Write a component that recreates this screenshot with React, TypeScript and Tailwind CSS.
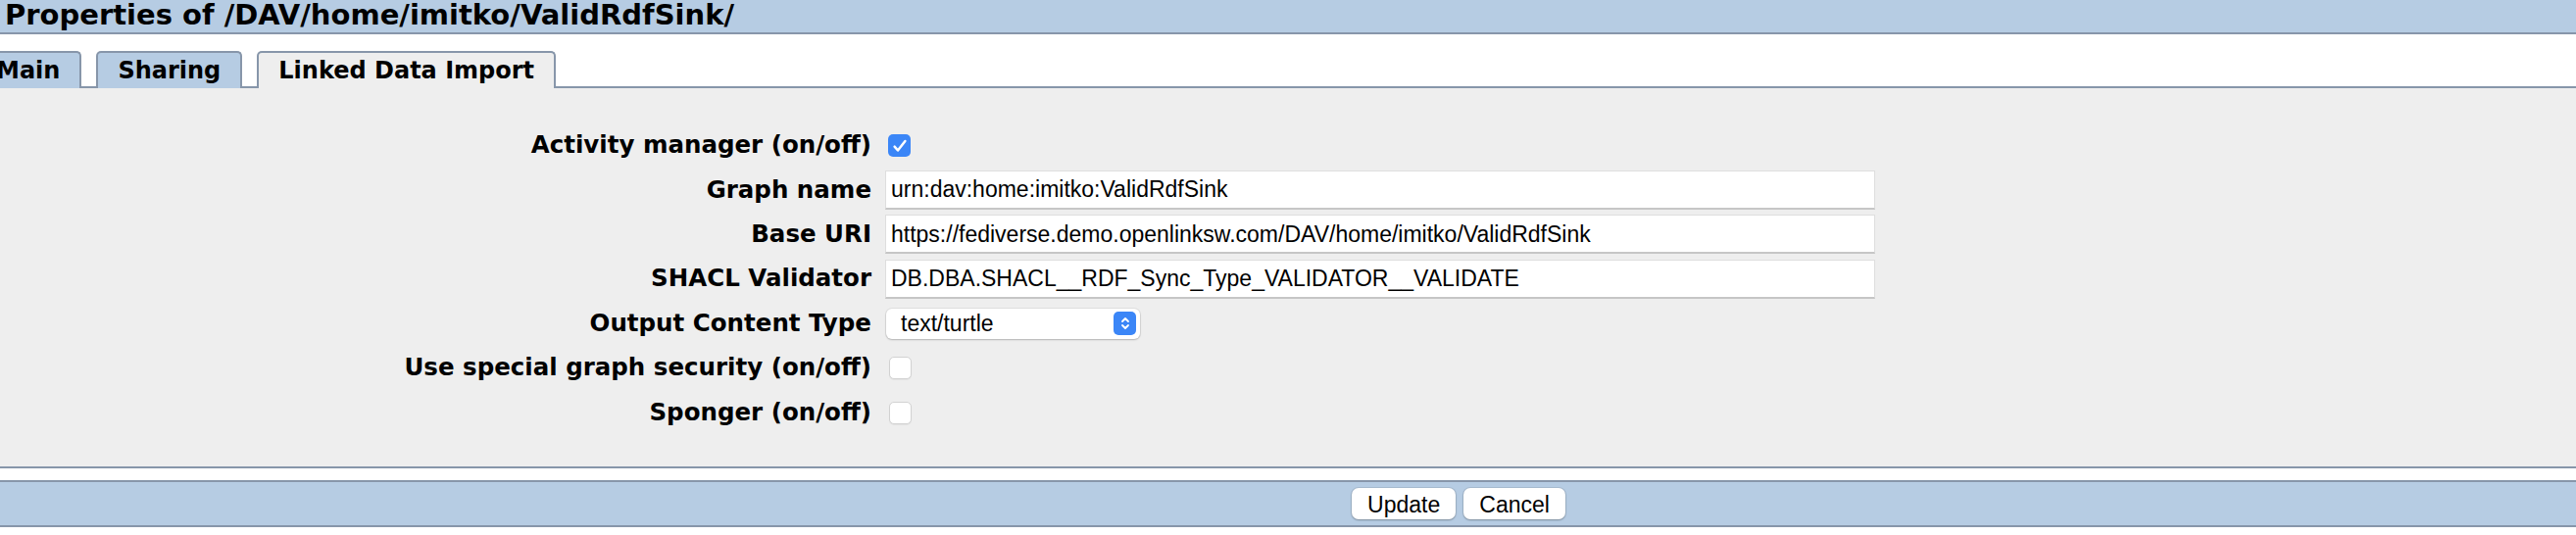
import type { ReactNode } from "react";

const label = "font-['DejaVu_Sans',sans-serif] font-bold text-[24.5px] text-black";
const control = "font-['Liberation_Sans',Arial,sans-serif] text-[23px] text-black";

function Row({ name, children }: { name: string; children: ReactNode }) {
  return (
    <div className="flex h-[45.4px] items-center">
      <div className={`w-[889px] shrink-0 text-right ${label}`}>{name}</div>
      <div className="ml-[14px] flex items-center">{children}</div>
    </div>
  );
}

function CheckBox({ checked }: { checked?: boolean }) {
  if (checked) {
    return (
      <span className="ml-[3px] flex h-[23px] w-[23px] items-center justify-center rounded-[5px] bg-[#3b86f7]">
        <svg width="18" height="18" viewBox="0 0 16 16" fill="none">
          <path d="M3.2 8.6l3 3.4L12.8 3.6" stroke="white" strokeWidth="2.2" strokeLinecap="round" strokeLinejoin="round" />
        </svg>
      </span>
    );
  }
  return <span className="ml-[4px] block h-[23px] w-[23px] rounded-[5px] border border-[#d2d2d2] bg-white shadow-[0_1px_1px_rgba(0,0,0,0.05)]" />;
}

function TextInput({ value }: { value: string }) {
  return (
    <div
      className={`flex h-[40px] w-[1010px] items-center border border-[#dedede] border-b-2 border-b-[#c6c6c6] bg-white pl-[5px] ${control}`}
    >
      {value}
    </div>
  );
}

function Select({ value }: { value: string }) {
  return (
    <div
      className={`ml-[1px] flex h-[31px] w-[259px] items-center justify-between rounded-[6px] bg-white pl-[15px] pr-[4px] shadow-[0_0_0_1px_rgba(0,0,0,0.06),0_1px_2px_rgba(0,0,0,0.2)] ${control}`}
    >
      <span>{value}</span>
      <span className="flex h-[24px] w-[23px] items-center justify-center rounded-[5px] bg-[#3b86f7]">
        <svg width="12" height="16" viewBox="0 0 12 16" fill="none">
          <path d="M3 6l3-3 3 3M3 10l3 3 3-3" stroke="white" strokeWidth="1.8" strokeLinecap="round" strokeLinejoin="round" />
        </svg>
      </span>
    </div>
  );
}

function Tab({ title, active }: { title: string; active?: boolean }) {
  return (
    <div
      className={`-mb-[2px] flex h-[38px] items-center rounded-t-[5px] border-2 border-b-0 border-[#8796aa] px-[20px] font-['DejaVu_Sans',sans-serif] text-[24px] font-bold text-black ${
        active ? "bg-[#eeeeee]" : "bg-[#b6cce3]"
      }`}
    >
      {title}
    </div>
  );
}

function Button({ children }: { children: ReactNode }) {
  return (
    <button
      className={`h-[32px] rounded-[7px] bg-white px-[16px] text-[#222] shadow-[0_0_0_1px_rgba(0,0,0,0.08),0_1px_2px_rgba(0,0,0,0.25)] ${control}`}
    >
      {children}
    </button>
  );
}

export default function App() {
  return (
    <div className="min-h-[546px] w-full overflow-hidden bg-white">
      <div className="h-[35px] border-b-2 border-[#8796aa] bg-[#b6cce3] pl-[5px] font-['DejaVu_Sans',sans-serif] text-[29px] font-bold leading-[30px] text-black">
        Properties of /DAV/home/imitko/ValidRdfSink/
      </div>

      <div className="flex h-[55px] items-end border-b-2 border-[#8796aa]">
        <div className="-ml-[26px] flex gap-[15px]">
          <Tab title="Main" />
          <Tab title="Sharing" />
          <Tab title="Linked Data Import" active />
        </div>
      </div>

      <div className="h-[388px] border-b-2 border-[#8796aa] bg-[#eeeeee] pt-[36px]">
        <Row name="Activity manager (on/off)">
          <CheckBox checked />
        </Row>
        <Row name="Graph name">
          <TextInput value="urn:dav:home:imitko:ValidRdfSink" />
        </Row>
        <Row name="Base URI">
          <TextInput value="https://fediverse.demo.openlinksw.com/DAV/home/imitko/ValidRdfSink" />
        </Row>
        <Row name="SHACL Validator">
          <TextInput value="DB.DBA.SHACL__RDF_Sync_Type_VALIDATOR__VALIDATE" />
        </Row>
        <Row name="Output Content Type">
          <Select value="text/turtle" />
        </Row>
        <Row name="Use special graph security (on/off)">
          <CheckBox />
        </Row>
        <Row name="Sponger (on/off)">
          <CheckBox />
        </Row>
      </div>

      <div className="mt-[12px] flex h-[48px] items-center justify-center gap-[8px] border-y-2 border-[#8796aa] bg-[#b6cce3] pl-[348px]">
        <Button>Update</Button>
        <Button>Cancel</Button>
      </div>
    </div>
  );
}
